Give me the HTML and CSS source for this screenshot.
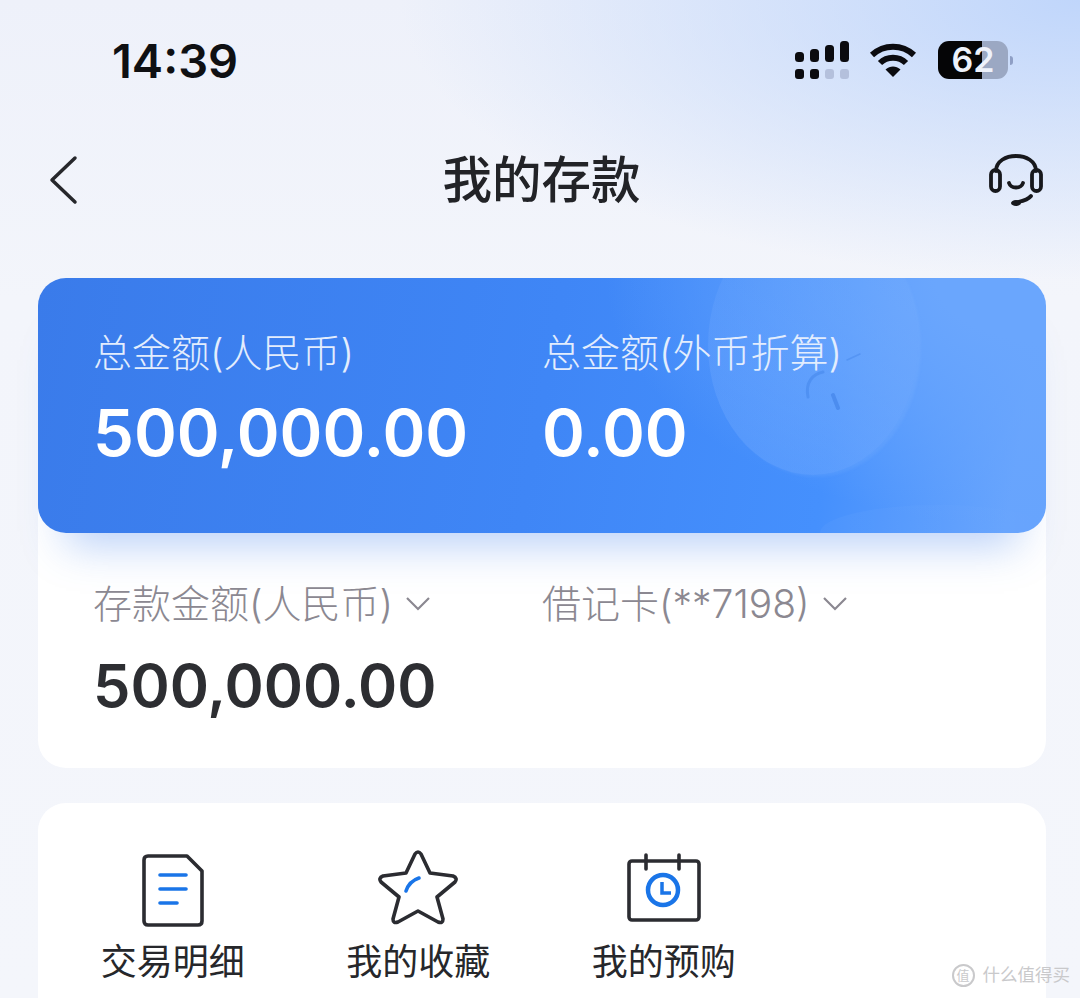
FILE: index.html
```html
<!DOCTYPE html>
<html lang="zh-CN">
<head>
  <meta charset="UTF-8" />
  <title>我的存款</title>
  <link rel="stylesheet" href="styles.css">
</head>
<body>

  <div class="status-bar">
    <span class="time">14:39</span>
    <div class="status-icons">
      <svg class="signal" width="56" height="40" viewBox="0 0 56 40">
        <g fill="#0b0b0f">
          <rect x="1" y="12" width="9" height="10" rx="3.5"/>
          <rect x="16" y="9" width="9" height="13" rx="3.5"/>
          <rect x="31" y="5" width="9" height="17" rx="3.5"/>
          <rect x="46" y="1" width="9" height="21" rx="3.5"/>
          <rect x="1" y="29" width="9" height="10" rx="3"/>
          <rect x="16" y="29" width="9" height="10" rx="3"/>
        </g>
        <g fill="#b4c0dc">
          <rect x="31" y="29" width="9" height="10" rx="3"/>
          <rect x="46" y="29" width="9" height="10" rx="3"/>
        </g>
      </svg>
      <svg class="wifi" width="48" height="36" viewBox="0 0 48 36">
        <g fill="none" stroke="#0b0b0f" stroke-width="6">
          <path d="M3 13 C15 2 33 2 45 13"/>
          <path d="M11 21 C18 14 30 14 37 21"/>
        </g>
        <path d="M16.500 27.500 C21 23.500 27 23.500 31.500 27.500 L24 35 Z" fill="#0b0b0f"/>
      </svg>
      <div class="battery">62</div>
      <span class="battery-nub"></span>
    </div>
  </div>

  <div class="nav-bar">
    <svg class="back" width="30" height="50" viewBox="0 0 30 50">
      <path d="M27 3 L4 25 L27 47" fill="none" stroke="#26272b" stroke-width="3.500" stroke-linecap="round" stroke-linejoin="round"/>
    </svg>
    <h1>我的存款</h1>
    <svg class="service" width="56" height="56" viewBox="0 0 56 56">
      <g fill="none" stroke="#17181c" stroke-width="3.800" stroke-linecap="round">
        <path d="M8 19 C8 -1 48 -1 48 19"/>
        <rect x="3" y="18" width="9" height="21" rx="4.500"/>
        <rect x="44" y="18" width="9" height="21" rx="4.500"/>
        <path d="M21 31 C23 37 33 37 35 31"/>
        <path d="M43 44 C40 48 35 49 30 50"/>
      </g>
      <ellipse cx="28" cy="51" rx="5" ry="3" fill="#17181c"/>
    </svg>
  </div>

  <div class="deposit-card">
    <div class="hero">
      <div class="coin"></div>
      <div class="coin-low"></div>
      <svg class="coin-marks" width="210" height="200" viewBox="0 0 210 200">
        <g fill="none" stroke="#3f80e6" stroke-linecap="round">
          <path d="M115 94 C105 96 97 104 100 119" stroke-opacity="0.45" stroke-width="3"/>
          <path d="M125 117 L130 130" stroke-opacity="0.6" stroke-width="4"/>
          <path d="M139 82 L152 76" stroke-opacity="0.4" stroke-width="1.500"/>
        </g>
      </svg>
      <div class="hero-col">
        <div class="hero-label">总金额(人民币)</div>
        <div class="hero-num">500,000.00</div>
      </div>
      <div class="hero-col">
        <div class="hero-label">总金额(外币折算)</div>
        <div class="hero-num">0.00</div>
      </div>
    </div>
    <div class="detail">
      <div class="detail-row">
        <div class="detail-label detail-first">存款金额(人民币)
          <svg width="26" height="16" viewBox="0 0 26 16"><path d="M2 2 L13 13 L24 2" fill="none" stroke="#8b8891" stroke-width="2.200"/></svg>
        </div>
        <div class="detail-label">借记卡(**7198)
          <svg width="26" height="16" viewBox="0 0 26 16"><path d="M2 2 L13 13 L24 2" fill="none" stroke="#8b8891" stroke-width="2.200"/></svg>
        </div>
      </div>
      <div class="detail-num">500,000.00</div>
    </div>
  </div>

  <div class="menu-card">
    <div class="menu-item">
      <div class="menu-icon">
        <svg class="doc" width="62" height="74" viewBox="0 0 62 74">
          <path d="M6 3 H45 L60 18 V68 Q60 72 56 72 H6 Q2 72 2 68 V7 Q2 3 6 3 Z" fill="none" stroke="#2b2c31" stroke-width="3.600" stroke-linejoin="round"/>
          <g stroke="#1a75e8" stroke-width="3.600" stroke-linecap="round">
            <path d="M18 22 H44"/>
            <path d="M18 36 H44"/>
            <path d="M18 50 H35"/>
          </g>
        </svg>
      </div>
      <span>交易明细</span>
    </div>
    <div class="menu-item">
      <div class="menu-icon">
        <svg width="80" height="76" viewBox="0 0 80 76">
          <path d="M37 5 Q40 1 43 5 L52 24 L75 27 Q80 29 77 33 L59 48 L65 70 Q65 75 60 73 L40 62 L20 73 Q15 75 15 70 L21 48 L3 33 Q0 29 5 27 L28 24 Z" fill="none" stroke="#2b2c31" stroke-width="3.600" stroke-linejoin="round"/>
          <path d="M28 42 C30 36 35 31 41 29" fill="none" stroke="#1a75e8" stroke-width="3.600" stroke-linecap="round"/>
        </svg>
      </div>
      <span>我的收藏</span>
    </div>
    <div class="menu-item">
      <div class="menu-icon">
        <svg class="calendar" width="75" height="70" viewBox="0 0 75 70">
          <rect x="3" y="8" width="70" height="59" rx="3" fill="none" stroke="#2b2c31" stroke-width="3.600"/>
          <path d="M20 2 V16 M53 2 V16" stroke="#2b2c31" stroke-width="3.600" stroke-linecap="round"/>
          <circle cx="37" cy="37" r="15" fill="none" stroke="#1a75e8" stroke-width="4.500"/>
          <path d="M36 29 V40 H45" fill="none" stroke="#1a75e8" stroke-width="3.500"/>
        </svg>
      </div>
      <span>我的预购</span>
    </div>
  </div>

  <div class="watermark">
    <span class="watermark-logo">值</span>
    <span>什么值得买</span>
  </div>

</body>
</html>
```

FILE: styles.css
```css
* {
  box-sizing: border-box;
}

html,
body {
  height: 998px;
}

body {
  margin: 0;
  overflow: hidden;
  position: relative;
  background:
    radial-gradient(ellipse 680px 280px at 100% 0, #c0d6fb 0%, rgba(192, 214, 251, 0) 100%),
    linear-gradient(180deg, #eef1fa 0%, #f3f5fb 30%, #f4f6fb 100%);
  font-family: "Inter", "Noto Sans CJK SC", sans-serif;
  color: #26272b;
}

.status-bar {
  height: 122px;
  padding: 35px 67px 0 112px;
  display: flex;
  justify-content: space-between;
  align-items: flex-start;
}

.time {
  font-size: 47px;
  font-weight: 600;
  line-height: 52px;
  color: #0f1013;
}

.status-icons {
  display: flex;
  align-items: center;
  margin-top: 5px;
}

.signal {
  margin-right: 19px;
}

.wifi {
  margin-right: 21px;
}

.battery {
  width: 70px;
  height: 38px;
  border-radius: 11px;
  background: linear-gradient(90deg, #050506 44px, #9ba8c3 44px);
  text-align: center;
  font-size: 34px;
  font-weight: 600;
  line-height: 38px;
  color: #eef2fb;
}

.battery-nub {
  width: 3px;
  height: 9px;
  margin-left: 2px;
  border-radius: 0 3px 3px 0;
  background: #8f9fc5;
}

.nav-bar {
  height: 116px;
  padding: 0 36px 0 48px;
  display: grid;
  grid-template-columns: 1fr auto 1fr;
  align-items: center;
}

.nav-bar h1 {
  margin: 0 9px 0 0;
  font-size: 49.500px;
  font-weight: 500;
  line-height: 60px;
  color: #222327;
}

.service {
  justify-self: end;
}

.deposit-card {
  position: relative;
  margin: 40px 34px 0 38px;
  height: 490px;
  border-radius: 28px;
  background: #fff;
}

.hero {
  position: relative;
  height: 255px;
  padding: 46px 55px 0;
  display: grid;
  grid-template-columns: 449px 1fr;
  border-radius: 28px;
  overflow: hidden;
  background:
    radial-gradient(ellipse 440px 250px at 100% 0, #6aa6fd 25%, rgba(106, 166, 253, 0) 100%),
    linear-gradient(100deg, #3a7bea 0%, #3f86f6 50%, #4590fd 78%, #67a4fd 96%);
  box-shadow: 0 40px 40px -28px rgba(60, 125, 235, 0.36);
  color: #fff;
}

.coin {
  position: absolute;
  left: 670px;
  top: -63px;
  width: 210px;
  height: 260px;
  border-radius: 50%;
  background: linear-gradient(180deg, rgba(130, 180, 255, 0.1), rgba(130, 180, 255, 0.3));
  box-shadow: 3px 2px 3px rgba(170, 205, 255, 0.1);
}

.coin-low {
  position: absolute;
  right: -10px;
  bottom: 0;
  width: 236px;
  height: 28px;
  border-radius: 118px 118px 0 0 / 28px 28px 0 0;
  background: linear-gradient(90deg, rgba(255, 255, 255, 0.03), rgba(255, 255, 255, 0));
}

.coin-marks {
  position: absolute;
  left: 670px;
  top: 0;
  filter: blur(0.6px);
}

.hero-col {
  position: relative;
}

.hero-label {
  font-size: 39px;
  font-weight: 300;
  line-height: 58px;
  color: #e3edfd;
}

.hero-num {
  margin-top: 13px;
  font-size: 65px;
  font-weight: 600;
  line-height: 76px;
}

.detail {
  position: relative;
  padding: 42px 55px 0;
}

.detail-row {
  display: flex;
}

.detail-label {
  display: flex;
  align-items: center;
  gap: 12px;
  font-size: 39px;
  font-weight: 300;
  line-height: 58px;
  color: #8b8891;
}

.detail-first {
  width: 449px;
}

.detail-num {
  margin-top: 16px;
  font-size: 59.500px;
  font-weight: 600;
  line-height: 72px;
  color: #2d2e32;
}

.menu-card {
  margin: 35px 34px 0 38px;
  height: 240px;
  padding: 45px 0 0 12px;
  display: grid;
  grid-template-columns: repeat(3, 245.500px);
  align-items: start;
  border-radius: 28px;
  background: #fff;
}

.menu-item {
  display: flex;
  flex-direction: column;
  align-items: center;
  font-size: 36px;
  font-weight: 400;
  line-height: 52px;
  color: #26272b;
}

.menu-icon {
  height: 78px;
  margin-bottom: 10px;
  display: flex;
  align-items: center;
}

.doc {
  margin-top: 6px;
}

.calendar {
  margin-top: 2px;
}

.watermark {
  position: absolute;
  right: 10px;
  bottom: 11px;
  display: flex;
  align-items: center;
  gap: 8px;
  font-size: 17.500px;
  line-height: 24px;
  color: #c9c9cb;
}

.watermark-logo {
  width: 23px;
  height: 23px;
  border: 2px solid #c9c9cb;
  border-radius: 50%;
  font-size: 13px;
  line-height: 19px;
  text-align: center;
}
```
